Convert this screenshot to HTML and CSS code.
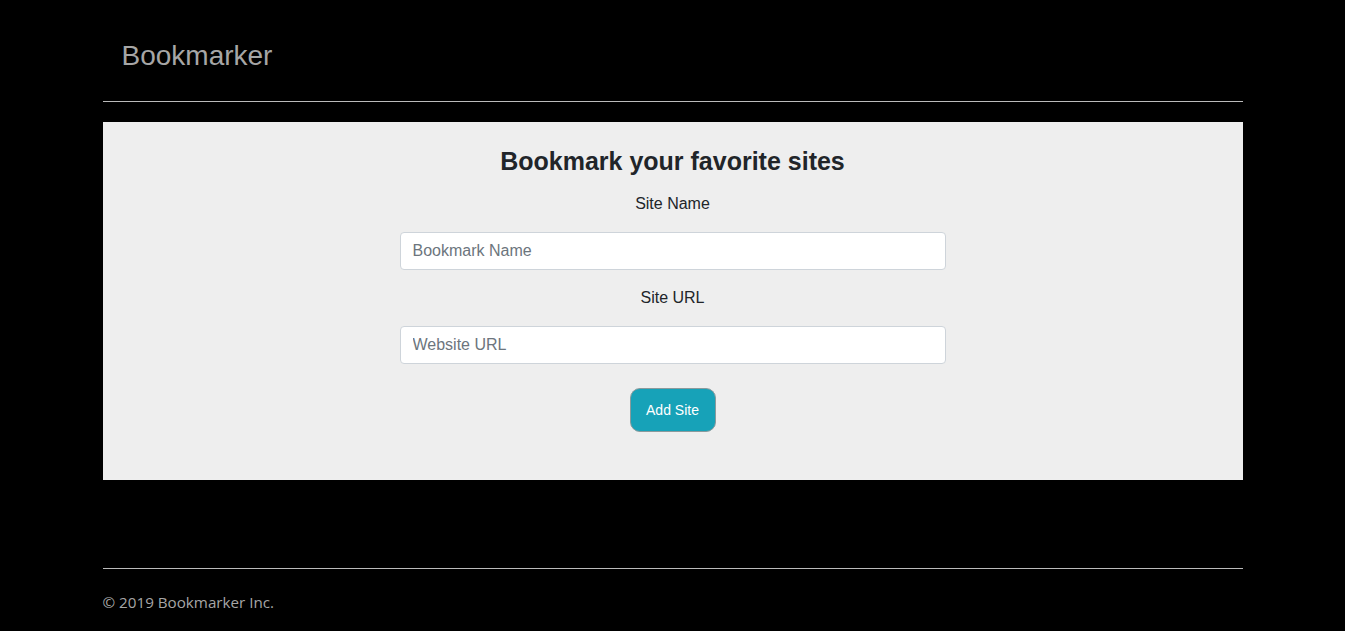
FILE: index.html
```html
<!DOCTYPE html>
<html>
<head>
<meta charset="utf-8">
<link rel="stylesheet" href="styles.css">
</head>
<body>
<div class="container">
  <header class="header">
    <h3 class="brand">Bookmarker</h3>
  </header>
  <hr class="rule">
  <section class="jumbotron">
    <h2 class="title">Bookmark your favorite sites</h2>
    <form class="form">
      <label class="label">Site Name</label>
      <input class="field" type="text" placeholder="Bookmark Name">
      <label class="label">Site URL</label>
      <input class="field" type="text" placeholder="Website URL">
      <button class="btn" type="button">Add Site</button>
    </form>
  </section>
  <hr class="rule footer-rule">
  <footer class="footer">© 2019 Bookmarker Inc.</footer>
</div>
</body>
</html>
```
FILE: styles.css
```css
html, body {
  margin: 0;
  padding: 0;
  background: #000;
}
body {
  font-family: "Liberation Sans", Arial, sans-serif;
  color: #212529;
}
.container {
  width: 1140px;
  margin: 0 auto;
}
.header {
  height: 101px;
  box-sizing: border-box;
  padding-top: 10px;
  display: flex;
  align-items: center;
  padding-left: 19px;
}
.brand {
  margin: 0;
  font-weight: normal;
  font-size: 28px;
  color: #a6a6a6;
  line-height: 1;
}
.rule {
  margin: 0;
  border: 0;
  border-top: 1px solid #bbb;
}
.jumbotron {
  margin-top: 20px;
  background: #eee;
  height: 358px;
  box-sizing: border-box;
  padding-top: 24px;
  display: flex;
  flex-direction: column;
  align-items: center;
}
.title {
  margin: 0;
  font-size: 25px;
  font-weight: bold;
  line-height: 30px;
  color: #212529;
}
.form {
  display: flex;
  flex-direction: column;
  align-items: center;
  width: 546px;
  margin-top: 18px;
}
.label {
  font-size: 16px;
  line-height: 20px;
  color: #212529;
}
.field {
  box-sizing: border-box;
  width: 546px;
  height: 38px;
  margin-top: 18px;
  margin-bottom: 18px;
  border: 1px solid #ced4da;
  border-radius: 4px;
  background: #fff;
  padding: 0 12px;
  font-family: "Liberation Sans", Arial, sans-serif;
  font-size: 16px;
  color: #495057;
}
.field::placeholder {
  color: #6c757d;
}
.btn {
  margin-top: 6px;
  width: 86px;
  height: 44px;
  background: #17a2b8;
  border: 1px solid #8a9a9c;
  border-radius: 10px;
  color: #fff;
  font-family: "Liberation Sans", Arial, sans-serif;
  font-size: 14px;
}
.footer-rule {
  margin-top: 88px;
  border-top-color: #bbb;
}
.footer {
  padding-top: 23px;
  font-family: "Open Sans", "Noto Sans", sans-serif;
  font-size: 15.2px;
  color: #a6a6a6;
}
```
